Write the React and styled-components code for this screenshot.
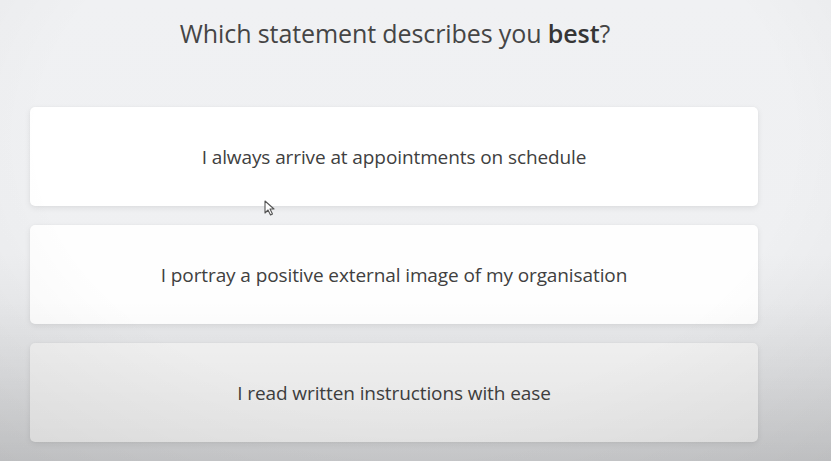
import React from "react";
import styled, { createGlobalStyle } from "styled-components";

const Global = createGlobalStyle`
  html, body { margin: 0; padding: 0; }
  body { font-family: "Open Sans", "Noto Sans", sans-serif; background: #eef0f2; }
`;

const Page = styled.div`
  position: relative;
  height: 461px;
  overflow: hidden;
  background: linear-gradient(180deg, #f0f1f3 0%, #eff0f2 55%, #e3e4e6 80%, #d6d7d9 100%);
  display: flex;
  flex-direction: column;
  align-items: center;
  padding-top: 14px;
  box-sizing: border-box;
`;

const Title = styled.h1`
  margin: 0;
  font-size: 25px;
  font-weight: 400;
  color: #454545;
  line-height: 38px;
  margin-left: -41px;
  letter-spacing: -0.1px;
  b { font-weight: 600; color: #363636; }
`;

const List = styled.div`
  margin-top: 55px;
  width: 728px;
  margin-left: -43px;
  display: flex;
  flex-direction: column;
  gap: 19px;
`;

const Card = styled.div`
  height: 99px;
  border-radius: 5px;
  background: ${(p) => p.$bg};
  box-shadow: 0 2px 6px rgba(0, 0, 0, 0.08), 0 0 2px rgba(0, 0, 0, 0.04);
  display: flex;
  align-items: center;
  justify-content: center;
  font-size: 19px;
  color: #404040;
  letter-spacing: -0.1px;
`;

const Vignette = styled.div`
  position: absolute;
  inset: 0;
  pointer-events: none;
  background:
    radial-gradient(ellipse 75% 95% at 50% 30%, rgba(0,0,0,0) 60%, rgba(0,0,0,0.05) 100%),
    linear-gradient(180deg, rgba(0,0,0,0) 65%, rgba(0,0,0,0.04) 85%, rgba(0,0,0,0.07) 100%);
`;

const Cursor = styled.svg`
  position: absolute;
  left: 264px;
  top: 200px;
`;

const items = [
  { text: "I always arrive at appointments on schedule", bg: "#ffffff" },
  { text: "I portray a positive external image of my organisation", bg: "#fefefe" },
  { text: "I read written instructions with ease", bg: "#f3f3f3" },
];

export default function App() {
  return (
    <>
      <Global />
      <Page>
        <Title>
          Which statement describes you <b>best</b>?
        </Title>
        <List>
          {items.map((it) => (
            <Card key={it.text} $bg={it.bg}>
              {it.text}
            </Card>
          ))}
        </List>
        <Vignette />
        <Cursor width="12" height="17" viewBox="0 0 12 17">
          <path d="M1 1 L1 13 L4 10 L6.5 15 L8.5 14 L6 9 L10 9 Z" fill="#fff" stroke="#555" strokeWidth="1.1" strokeLinejoin="round" />
        </Cursor>
      </Page>
    </>
  );
}
